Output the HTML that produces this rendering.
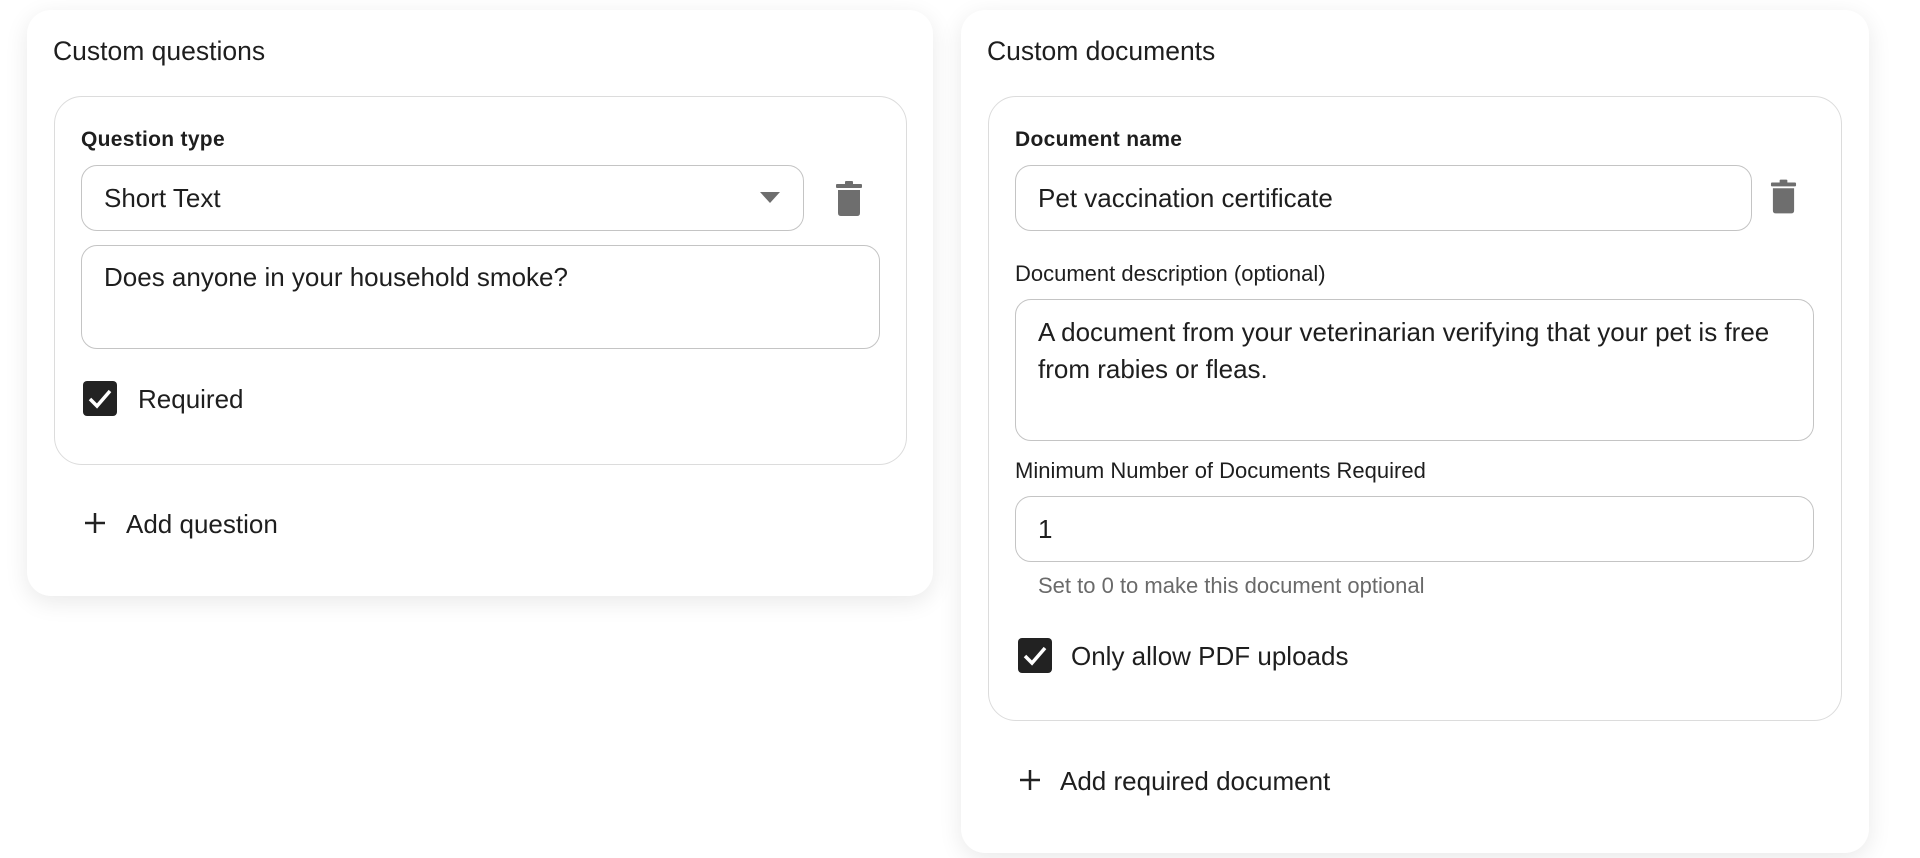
<!DOCTYPE html>
<html><head><meta charset="utf-8"><style>
*{box-sizing:border-box;margin:0;padding:0}
body{width:1920px;height:858px;background:#fff;font-family:"Liberation Sans",sans-serif;color:#1e1e1e;position:relative;overflow:hidden}
.card{position:absolute;background:#fff;border-radius:24px;box-shadow:0 6px 24px rgba(0,0,0,0.09)}
.inner{position:absolute;border:1.5px solid #dcdcdc;border-radius:28px}
.abs{position:absolute;white-space:nowrap}
.title{font-size:26.5px}
.lbl{font-size:22px}
.b{font-weight:bold;font-size:21px;letter-spacing:0.3px}
.field{position:absolute;border:1.8px solid #c4c4c4;border-radius:16px;background:#fff}
.txt{font-size:26px}
.cb{position:absolute;background:#222;border-radius:4px}
</style></head><body>
<div class="card" style="left:27px;top:10px;width:906px;height:586px"></div>
<div class="card" style="left:961px;top:10px;width:908px;height:843px"></div>

<div class="abs title" style="left:53px;top:36px">Custom questions</div>
<div class="inner" style="left:54px;top:96px;width:853px;height:369px"></div>
<div class="abs b" style="left:81px;top:128px">Question type</div>
<div class="field" style="left:81px;top:165px;width:723px;height:66px"></div>
<div class="abs txt" style="left:104px;top:183px">Short Text</div>
<svg class="abs" style="left:760px;top:192px" width="20" height="12"><path d="M0 0H20L10 11Z" fill="#6e6e6e"/></svg>
<svg class="abs" style="left:835px;top:181px" width="28" height="35" viewBox="0 0 28 35"><rect x="1" y="3" width="26" height="4" rx="1" fill="#6e6e6e"/><rect x="10" y="0" width="8" height="4" rx="1" fill="#6e6e6e"/><path d="M3 9H25V32Q25 35 22 35H6Q3 35 3 32Z" fill="#6e6e6e"/></svg>
<div class="field" style="left:81px;top:245px;width:799px;height:104px"></div>
<div class="abs txt" style="left:104px;top:262px">Does anyone in your household smoke?</div>
<div class="cb" style="left:83px;top:381px;width:34px;height:35px"></div>
<svg class="abs" style="left:83px;top:381px" width="34" height="35"><path d="M7 18L14 25L27 10" stroke="#fff" stroke-width="3.5" fill="none"/></svg>
<div class="abs txt" style="left:138px;top:384px">Required</div>
<svg class="abs" style="left:84px;top:512px" width="22" height="22"><path d="M11 1V21M1 11H21" stroke="#222" stroke-width="2.5"/></svg>
<div class="abs txt" style="left:126px;top:509px">Add question</div>

<div class="abs title" style="left:987px;top:36px">Custom documents</div>
<div class="inner" style="left:988px;top:96px;width:854px;height:625px"></div>
<div class="abs b" style="left:1015px;top:128px">Document name</div>
<div class="field" style="left:1015px;top:165px;width:737px;height:66px"></div>
<div class="abs txt" style="left:1038px;top:183px">Pet vaccination certificate</div>
<svg class="abs" style="left:1770px;top:179px" width="27" height="35" viewBox="0 0 28 35"><rect x="1" y="3" width="26" height="4" rx="1" fill="#6e6e6e"/><rect x="10" y="0" width="8" height="4" rx="1" fill="#6e6e6e"/><path d="M3 9H25V32Q25 35 22 35H6Q3 35 3 32Z" fill="#6e6e6e"/></svg>
<div class="abs lbl" style="left:1015px;top:261px">Document description (optional)</div>
<div class="field" style="left:1015px;top:299px;width:799px;height:142px"></div>
<div class="abs txt" style="left:1038px;top:314px;line-height:37px">A document from your veterinarian verifying that your pet is free<br>from rabies or fleas.</div>
<div class="abs lbl" style="left:1015px;top:458px">Minimum Number of Documents Required</div>
<div class="field" style="left:1015px;top:496px;width:799px;height:66px"></div>
<div class="abs txt" style="left:1038px;top:514px">1</div>
<div class="abs lbl" style="left:1038px;top:573px;color:#6a6a6a">Set to 0 to make this document optional</div>
<div class="cb" style="left:1018px;top:638px;width:34px;height:35px"></div>
<svg class="abs" style="left:1018px;top:638px" width="34" height="35"><path d="M7 18L14 25L27 10" stroke="#fff" stroke-width="3.5" fill="none"/></svg>
<div class="abs txt" style="left:1071px;top:641px">Only allow PDF uploads</div>
<svg class="abs" style="left:1019px;top:769px" width="22" height="22"><path d="M11 1V21M1 11H21" stroke="#222" stroke-width="2.5"/></svg>
<div class="abs txt" style="left:1060px;top:766px">Add required document</div>
</body></html>
